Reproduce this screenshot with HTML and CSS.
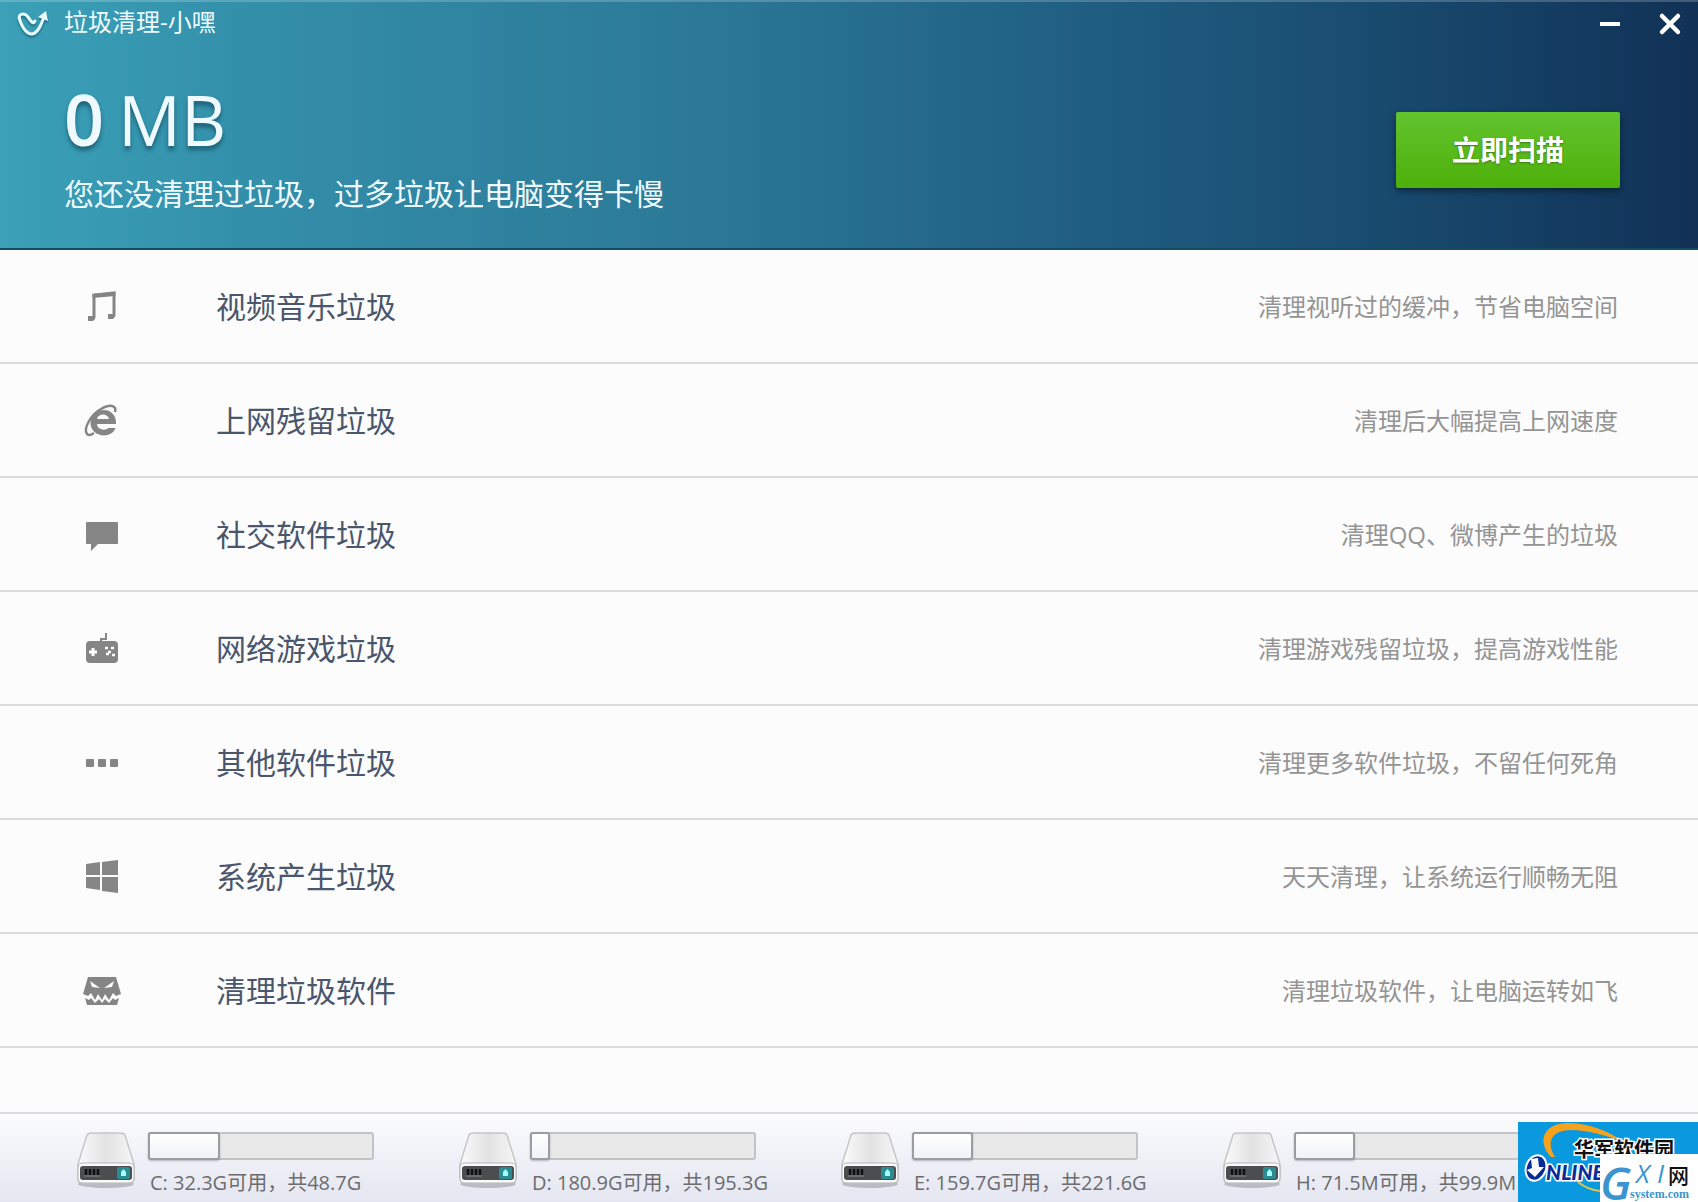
FILE: index.html
```html
<!DOCTYPE html>
<html lang="zh-CN">
<head>
<meta charset="utf-8">
<title>垃圾清理-小嘿</title>
<link rel="stylesheet" href="styles.css">
</head>
<body>
<svg class="defs" aria-hidden="true">
  <defs>
    <linearGradient id="case" x1="0" y1="0" x2="1" y2="0">
      <stop offset="0" stop-color="#fbfbfb"/><stop offset=".5" stop-color="#e2e2e2"/><stop offset="1" stop-color="#f6f6f6"/>
    </linearGradient>
    <symbol id="drive" viewBox="0 0 64 60">
      <ellipse cx="32" cy="52" rx="28" ry="4" fill="#9a9ca4" opacity=".6"/>
      <path d="M13 3Q14 1 18 1H46Q50 1 51 3L60 32V46Q60 51 55 51H9Q4 51 4 46V32Z" fill="url(#case)" stroke="#c6c6c8" stroke-width="1.5"/>
      <path d="M4 36Q4 31 9 31H55Q60 31 60 36V46Q60 51 55 51H9Q4 51 4 46Z" fill="#fafafa" stroke="#b5b5b8"/>
      <rect x="6" y="34" width="52" height="14" rx="3" fill="#4b4d50"/>
      <path d="M12 37V43M16 37V43M20 37V43M24 37V43" stroke="#111" stroke-width="2.5"/>
      <path d="M10 44H26" stroke="#85888b"/>
      <rect x="43" y="35" width="13" height="12" rx="2" fill="#2a8c90"/>
      <path d="M47 44V40L49.500 37L52 40V44Z" fill="#a5ffff"/>
    </symbol>
  </defs>
</svg>
<div class="app">
  <header class="hero">
    <div class="titlebar">
      <svg class="logo" viewBox="0 0 32 26" aria-hidden="true">
        <path d="M4 9C1 3 8 1 12 6C15 10 17 14 19 10M3 7C6 16 10 23 16 23C22 22 25 14 28 6" fill="none" stroke="#e8fbff" stroke-width="3" stroke-linecap="round"/>
        <path d="M22 6L30 0L32 10Z" fill="#e8fbff"/>
      </svg>
      <h1 class="title">垃圾清理-小嘿</h1>
      <button class="winbtn" type="button" aria-label="最小化"><svg viewBox="0 0 20 20"><path d="M0 10H20" stroke="#fff" stroke-width="4"/></svg></button>
      <button class="winbtn" type="button" aria-label="关闭"><svg viewBox="0 0 20 20"><path d="M2 2L18 18M18 2L2 18" stroke="#fff" stroke-width="4.5" stroke-linecap="round"/></svg></button>
    </div>
    <div class="summary">
      <div class="status">
        <p class="amount"><b>0</b><span>MB</span></p>
        <p class="hint">您还没清理过垃圾，过多垃圾让电脑变得卡慢</p>
      </div>
      <button class="scan" type="button">立即扫描</button>
    </div>
  </header>

  <main>
    <ul class="list">
      <li class="row">
        <svg class="icon" viewBox="0 0 40 36"><path d="M12 29V6L32 4V27" fill="none" stroke="#858585" stroke-width="3"/><path d="M10.500 5L33.500 3V7L10.500 9Z" fill="#858585"/><path d="M6 27H13V30L11 32H6ZM26 25H33V28L31 30H26Z" fill="#858585"/></svg>
        <h2 class="name">视频音乐垃圾</h2><p class="desc">清理视听过的缓冲，节省电脑空间</p>
      </li>
      <li class="row">
        <svg class="icon" viewBox="0 0 40 36"><path d="M34 21H15C15 27 24 28 26 25H33.500C30 36 9 35 8.500 20C9 3 35 2 34 21ZM15 16H27C26 10 16 10 15 16Z" fill="#858585" fill-rule="evenodd"/><path d="M33 9C35 2 28 1 19 6C9 11 1 26 5 31C6 33 9 32 12 30" fill="none" stroke="#858585" stroke-width="2.500"/></svg>
        <h2 class="name">上网残留垃圾</h2><p class="desc">清理后大幅提高上网速度</p>
      </li>
      <li class="row">
        <svg class="icon" viewBox="0 0 40 36"><path d="M5 5Q4 5 4 6V26Q4 27 5 27H9V34L16 27H35Q36 27 36 26V6Q36 5 35 5Z" fill="#858585"/></svg>
        <h2 class="name">社交软件垃圾</h2><p class="desc">清理QQ、微博产生的垃圾</p>
      </li>
      <li class="row">
        <svg class="icon" viewBox="0 0 40 36"><path d="M19 12V8H24V2" fill="none" stroke="#858585" stroke-width="2"/><rect x="4" y="10" width="32" height="22" rx="4" fill="#858585"/><path d="M7 21H15M11 17V25" stroke="#fff" stroke-width="3"/><path d="M23 17H26M29 17H32M26 21H29M24 23H27M30 24H33" stroke="#fff" stroke-width="2.500"/></svg>
        <h2 class="name">网络游戏垃圾</h2><p class="desc">清理游戏残留垃圾，提高游戏性能</p>
      </li>
      <li class="row">
        <svg class="icon" viewBox="0 0 40 36"><g fill="#858585"><rect x="4" y="14" width="8" height="8" rx="1"/><rect x="16" y="14" width="8" height="8" rx="1"/><rect x="28" y="14" width="8" height="8" rx="1"/></g></svg>
        <h2 class="name">其他软件垃圾</h2><p class="desc">清理更多软件垃圾，不留任何死角</p>
      </li>
      <li class="row">
        <svg class="icon" viewBox="0 0 40 36"><path d="M4 5L18 3V16H4ZM20 3L36 1V16H20ZM4 18H18V31L4 29ZM20 18H36V34L20 32Z" fill="#858585"/></svg>
        <h2 class="name">系统产生垃圾</h2><p class="desc">天天清理，让系统运行顺畅无阻</p>
      </li>
      <li class="row">
        <svg class="icon" viewBox="0 0 40 36"><path d="M6 4H34L39 21L34 23L31 20L27 27L23 21L20 27L16 21L13 27L9 20L6 23L1 21ZM8 8L10 14L18 15ZM32 8L30 14L22 15Z" fill="#858585" fill-rule="evenodd"/><path d="M3 25L7 27L9 25L13 30L17 26L20 30L23 26L27 30L31 25L33 27L37 25L35 32H5Z" fill="#858585"/></svg>
        <h2 class="name">清理垃圾软件</h2><p class="desc">清理垃圾软件，让电脑运转如飞</p>
      </li>
    </ul>
  </main>

  <footer class="disks">
    <div class="disk"><svg class="drive" aria-hidden="true"><use href="#drive"/></svg><div class="usage"><div class="bar"><div class="fill" style="width:32%"></div></div><p>C: 32.3G可用，共48.7G</p></div></div>
    <div class="disk"><svg class="drive" aria-hidden="true"><use href="#drive"/></svg><div class="usage"><div class="bar"><div class="fill" style="width:9%"></div></div><p>D: 180.9G可用，共195.3G</p></div></div>
    <div class="disk"><svg class="drive" aria-hidden="true"><use href="#drive"/></svg><div class="usage"><div class="bar"><div class="fill" style="width:27%"></div></div><p>E: 159.7G可用，共221.6G</p></div></div>
    <div class="disk"><svg class="drive" aria-hidden="true"><use href="#drive"/></svg><div class="usage"><div class="bar"><div class="fill" style="width:27%"></div></div><p>H: 71.5M可用，共99.9M</p></div></div>
  </footer>

  <aside class="badge">
    <svg viewBox="0 0 180 80">
      <rect width="180" height="80" fill="#0a98de"/>
      <path d="M33 35C19 20 25 2 48 1C70 0 92 10 106 20C88 13 68 8 54 8C33 8 28 20 37 35Z" fill="#f5a21c"/>
      <path d="M60 60Q70 68 82 69" fill="none" stroke="#d8c850" stroke-width="2"/>
      <text class="cn" x="56" y="35">华军软件园</text>
      <text class="en" x="28" y="58">NLINE</text>
      <ellipse cx="18" cy="46" rx="10" ry="13" transform="rotate(20 18 46)" fill="#0b2a9a" stroke="#fff" stroke-width="2"/>
      <path d="M13 37L20 36L21 45L26 45L17 55L9 48L14 46Z" fill="#fff"/>
      <rect x="82" y="32" width="98" height="48" fill="#fff"/>
      <text class="g" x="82" y="78">G</text>
      <text class="xi" x="118" y="61">X</text>
      <text class="xi" x="139" y="61">I</text>
      <text class="net" x="150" y="61">网</text>
      <text class="sys" x="112" y="76">system.com</text>
    </svg>
  </aside>
</div>
</body>
</html>
```
FILE: styles.css
```css
* { box-sizing: border-box; }
body, h1, h2, p, ul { margin: 0; padding: 0; font-weight: 400; }
body {
  font-family: "Open Sans", "Noto Sans CJK SC", sans-serif;
  background: #fcfcfc;
}
button { border: 0; padding: 0; font-family: inherit; cursor: pointer; }
.defs { position: absolute; width: 0; height: 0; }
.app { position: relative; min-height: 100vh; display: flex; flex-direction: column; overflow: hidden; }

.hero {
  height: 250px;
  background: linear-gradient(90deg, #3ba0b8 0%, #338faa 15%, #2b7896 42%, #1f5d80 65%, #184a6e 82%, #113156 100%);
  border-top: 2px solid rgba(255, 255, 255, .2);
  border-bottom: 2px solid #164a63;
  color: #eefaff;
}
.titlebar { display: flex; align-items: center; height: 44px; padding: 0 18px 0 16px; }
.logo { width: 32px; height: 28px; filter: drop-shadow(0 2px 1px rgba(0, 60, 80, .5)); }
.title { flex: 1; padding: 0 0 4px; margin-left: 16px; font-size: 24px; line-height: 36px; }
.winbtn { width: 20px; height: 20px; margin-left: 40px; background: none; }
.winbtn svg { display: block; width: 20px; height: 20px; overflow: visible; }
.summary { display: flex; justify-content: space-between; align-items: flex-start; padding: 32px 78px 0 64px; }
.amount {
  display: flex;
  gap: 14px;
  font-size: 70px;
  line-height: 82px;
  text-shadow: 0 4px 4px rgba(10, 60, 80, .6);
}
.amount b { font-weight: 600; }
.hint { margin-top: 12px; font-size: 30px; line-height: 44px; }
.scan {
  width: 224px; height: 76px; margin-top: 34px; padding-bottom: 2px;
  font-size: 28px; font-weight: 700; color: #fff;
  text-shadow: 0 1px 2px #3a7a10;
  background: linear-gradient(#62c42e, #4eb00a);
  border-radius: 2px;
  box-shadow: 0 3px 6px rgba(0, 20, 30, .6);
}

.list { list-style: none; }
.row { display: flex; align-items: center; height: 114px; padding: 2px 80px 0 82px; border-bottom: 2px solid #d9dbdc; }
.icon { width: 40px; height: 36px; }
.name { margin-left: 94px; font-size: 30px; line-height: 44px; color: #4a566c; }
.desc { margin-left: auto; font-size: 24px; line-height: 36px; color: #949494; }

.disks {
  margin-top: auto;
  display: flex;
  height: 90px;
  padding: 18px 0 0 74px;
  border-top: 2px solid #dadbdc;
  background: linear-gradient(#fcfcfd, #e4e6f1);
  overflow: hidden;
}
.disk { flex: 0 0 382px; display: flex; }
.drive { width: 64px; height: 60px; margin-right: 10px; }
.bar { width: 226px; height: 28px; background: #e9e9e9; border-radius: 3px; box-shadow: inset 0 0 0 2px #c2c3c7; }
.fill { height: 28px; border: 2px solid #9a9ba3; border-radius: 3px; background: linear-gradient(#fff, #f1f2f7); box-shadow: 0 1px 2px rgba(0, 0, 0, .25); }
.usage p { margin: 8px 0 0 2px; font-size: 20px; line-height: 30px; white-space: nowrap; color: #6c6c6e; }

.badge { position: absolute; right: 0; bottom: 0; width: 180px; height: 80px; }
.badge svg { display: block; width: 180px; height: 80px; }
.cn { font: 700 20px "Noto Sans CJK SC", sans-serif; fill: #111; stroke: #fff; stroke-width: 3px; paint-order: stroke; }
.en { font: italic 900 21px Lato, sans-serif; fill: #0b2a9a; stroke: #fff; stroke-width: 3px; paint-order: stroke; }
.g { font: italic 600 46px "Open Sans", sans-serif; fill: #3a94cf; }
.xi { font: italic 400 26px "Open Sans", sans-serif; fill: #3a94cf; }
.net { font: 500 21px "Noto Sans CJK SC", sans-serif; fill: #111; }
.sys { font: 700 12px "Liberation Serif", serif; fill: #3a94cf; }
```
